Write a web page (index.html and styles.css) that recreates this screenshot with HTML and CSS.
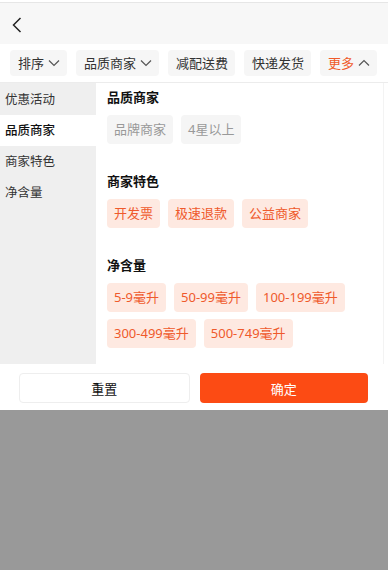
FILE: index.html
```html
<!DOCTYPE html>
<html lang="zh">
<head>
<meta charset="utf-8">
<link rel="stylesheet" href="styles.css">
</head>
<body>
<div class="app">
  <div class="topbar">
    <svg class="back" width="12" height="16" viewBox="0 0 12 16"><path d="M9.5 1 L2.5 8 L9.5 15" fill="none" stroke="#222" stroke-width="1.5"/></svg>
  </div>
  <div class="filters">
    <div class="fchip">排序<svg class="chev" width="12" height="8" viewBox="0 0 12 8"><path d="M1 1.5 L6 6.5 L11 1.5" fill="none" stroke="#555" stroke-width="1.2"/></svg></div>
    <div class="fchip">品质商家<svg class="chev" width="12" height="8" viewBox="0 0 12 8"><path d="M1 1.5 L6 6.5 L11 1.5" fill="none" stroke="#555" stroke-width="1.2"/></svg></div>
    <div class="fchip">减配送费</div>
    <div class="fchip">快递发货</div>
    <div class="fchip active">更多<svg class="chev" width="12" height="8" viewBox="0 0 12 8"><path d="M1 6.5 L6 1.5 L11 6.5" fill="none" stroke="#555" stroke-width="1.2"/></svg></div>
  </div>
  <div class="main">
    <div class="side">
      <div class="sitem">优惠活动</div>
      <div class="sitem sel">品质商家</div>
      <div class="sitem">商家特色</div>
      <div class="sitem">净含量</div>
    </div>
    <div class="content">
      <div class="section">
        <div class="stitle">品质商家</div>
        <div class="chips">
          <span class="chip gray">品牌商家</span>
          <span class="chip gray">4星以上</span>
        </div>
      </div>
      <div class="section">
        <div class="stitle">商家特色</div>
        <div class="chips">
          <span class="chip on">开发票</span>
          <span class="chip on">极速退款</span>
          <span class="chip on">公益商家</span>
        </div>
      </div>
      <div class="section">
        <div class="stitle">净含量</div>
        <div class="chips">
          <span class="chip on">5-9毫升</span>
          <span class="chip on">50-99毫升</span>
          <span class="chip on">100-199毫升</span>
          <span class="chip on">300-499毫升</span>
          <span class="chip on">500-749毫升</span>
        </div>
      </div>
    </div>
  </div>
  <div class="footer">
    <button class="btn reset">重置</button>
    <button class="btn ok">确定</button>
  </div>
</div>
</body>
</html>
```
FILE: styles.css
```css
* { box-sizing: border-box; }
html, body { margin: 0; padding: 0; }
body {
  background: #999999;
  font-family: "Noto Sans", "Noto Sans CJK SC", sans-serif;
  font-size: 13px;
  color: #222;
}
.app {
  height: 410px;
  background: #fff;
  display: flex;
  flex-direction: column;
  padding-top: 2px;
}
.topbar {
  flex-shrink: 0;
  height: 42px;
  background: #f7f7f7;
  border-top: 1px solid #e6e6e6;
  display: flex;
  align-items: center;
  padding-left: 11px;
}
.back { display: block; margin-top: 2px; }
.filters {
  flex-shrink: 0;
  height: 39px;
  display: flex;
  align-items: center;
  gap: 9px;
  padding: 0 10px;
  border-bottom: 1px solid #ececec;
}
.fchip {
  height: 26px;
  display: flex;
  align-items: center;
  gap: 4px;
  padding: 0 7px 0 8px;
  background: #f6f6f6;
  border-radius: 4px;
  color: #333;
  font-size: 13px;
  line-height: 26px;
}
.fchip.active { color: #f05a2a; }
.chev { display: block; }
.main {
  flex: 1;
  min-height: 0;
  overflow: hidden;
  display: flex;
}
.side {
  width: 96px;
  background: #efefef;
  padding-top: 1px;
}
.sitem {
  height: 31px;
  line-height: 31px;
  padding-left: 5px;
  color: #333;
  font-size: 12.5px;
}
.sitem.sel {
  background: #fff;
  color: #111;
  font-weight: 500;
}
.content {
  flex: 1;
  padding: 5px 0 0 11px;
  border-right: 1px solid #f3f3f3;
  margin-right: 4px;
}
.section { margin-bottom: 28px; }
.stitle {
  font-weight: 700;
  font-size: 13px;
  color: #111;
  line-height: 18px;
  margin-bottom: 9px;
}
.chips {
  display: flex;
  flex-wrap: wrap;
  gap: 7px 8px;
}
.chip {
  height: 29px;
  line-height: 29px;
  padding: 0 7px;
  border-radius: 4px;
  font-size: 13px;
}
.chip.gray { background: #f5f5f5; color: #999; }
.chip.on { background: #fee9e1; color: #ef5a2c; }
.footer {
  flex-shrink: 0;
  height: 46px;
  display: flex;
  gap: 10px;
  padding: 9px 20px 0 19px;
}
.btn {
  flex: 1;
  height: 30px;
  border-radius: 4px;
  font-family: inherit;
  font-size: 13px;
  cursor: pointer;
}
.btn.reset {
  background: #fff;
  border: 1px solid #eeeeee;
  color: #111;
}
.btn.ok {
  background: #fc4b14;
  border: none;
  color: #fff;
}
```
